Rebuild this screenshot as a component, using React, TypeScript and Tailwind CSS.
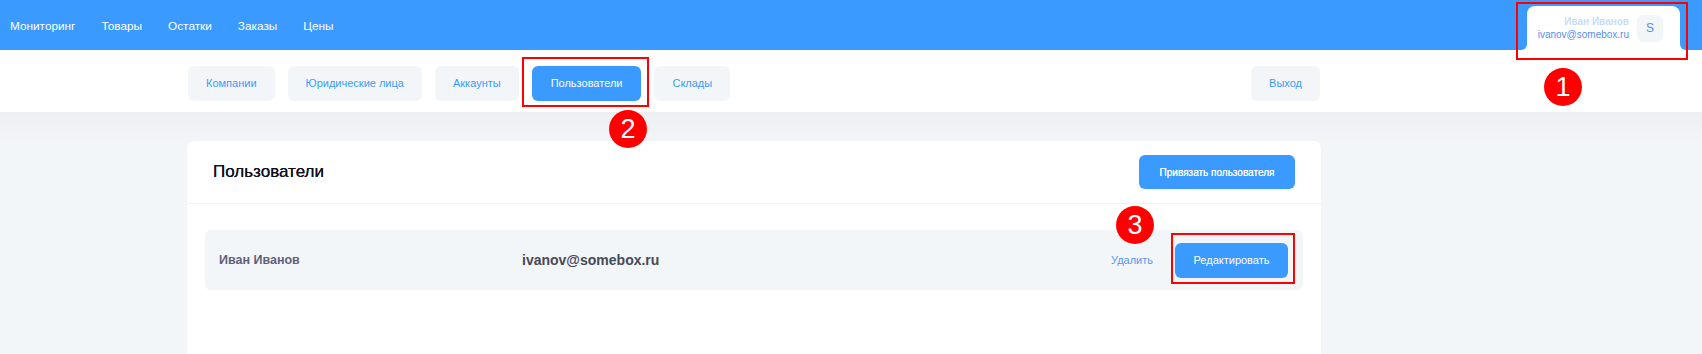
export default function App() {
  const tabs = ["Компании", "Юридические лица", "Аккаунты", "Пользователи", "Склады"];
  return (
    <div className="relative h-[354px] w-[1702px] overflow-hidden bg-[#f3f6f9] font-['Liberation_Sans',Arial,sans-serif]">
      <header className="flex h-[50px] items-end justify-between bg-[#3a9aff]">
        <nav className="flex h-full items-center gap-[26px] pl-[10px] pt-[3px] text-[11.8px] text-white">
          <span>Мониторинг</span>
          <span>Товары</span>
          <span>Остатки</span>
          <span>Заказы</span>
          <span>Цены</span>
        </nav>
        <div className="relative mr-[22px] flex h-[44px] w-[153px] items-center justify-end gap-[8px] rounded-t-[8px] bg-white pr-[17px]">
          <div className="absolute bottom-0 left-[-6px] h-[6px] w-[6px] bg-white">
            <div className="h-full w-full rounded-br-[6px] bg-[#3a9aff]" />
          </div>
          <div className="absolute bottom-0 right-[-6px] h-[6px] w-[6px] bg-white">
            <div className="h-full w-full rounded-bl-[6px] bg-[#3a9aff]" />
          </div>
          <div className="flex flex-col items-end text-[10px] leading-[13px]">
            <span className="font-bold text-[#c8dcfa]">Иван Иванов</span>
            <span className="text-[#5a8df0]">ivanov@somebox.ru</span>
          </div>
          <div className="flex h-[27px] w-[26px] items-center justify-center rounded-[6px] bg-[#f3f6f9] text-[12px] text-[#5a8df0]">
            S
          </div>
        </div>
      </header>

      <div className="h-[63px] border-b border-[#eceef1] bg-white">
        <div className="ml-[188px] flex w-[1132px] items-start justify-between pt-[16px]">
          <div className="flex gap-[13px]">
            {tabs.map((t) => (
              <div
                key={t}
                className={
                  t === "Пользователи"
                    ? "flex h-[35px] items-center rounded-[6px] bg-[#3a9aff] px-[19px] text-[11px] text-white"
                    : "flex h-[35px] items-center rounded-[6px] bg-[#f3f6f9] px-[18px] text-[11px] text-[#3a9aff]"
                }
              >
                {t}
              </div>
            ))}
          </div>
          <div className="flex h-[35px] items-center rounded-[6px] bg-[#f3f6f9] px-[18px] text-[11px] text-[#3a9aff]">
            Выход
          </div>
        </div>
      </div>

      <main className="bg-[linear-gradient(to_bottom,#edeff3,#f3f6f9_30px)] pt-[28px]">
        <section className="ml-[187px] h-[213px] w-[1134px] rounded-t-[8px] bg-white">
          <div className="flex h-[63px] items-center justify-between border-b border-[#eef0f3] px-[26px]">
            <h2 className="text-[17px] text-[#0f1020] [text-shadow:0_0_0.3px_#0f1020]">Пользователи</h2>
            <div className="flex h-[34px] w-[156px] items-center justify-center rounded-[6px] bg-[#3a9aff] text-[10px] text-white [text-shadow:0_0_0.3px_#fff]">
              Привязать пользователя
            </div>
          </div>
          <div className="px-[18px] pt-[26px]">
            <div className="flex h-[60px] items-center rounded-[6px] bg-[#f3f6f9] pl-[14px] pr-[15px]">
              <span className="w-[303px] text-[12.5px] font-bold text-[#5f5f78]">Иван Иванов</span>
              <span className="text-[14px] font-bold text-[#474857]">ivanov@somebox.ru</span>
              <span className="ml-auto mr-[22px] text-[11px] text-[#5b95ee]">Удалить</span>
              <div className="flex h-[35px] w-[113px] items-center justify-center rounded-[6px] bg-[#3a9aff] text-[11px] text-white">
                Редактировать
              </div>
            </div>
          </div>
        </section>
      </main>

      {/* annotations */}
      <div className="absolute left-[1516px] top-[2px] h-[58px] w-[172px] border-2 border-[#ff0000]" />
      <div className="absolute left-[1544px] top-[68px] flex h-[38px] w-[38px] items-center justify-center rounded-full bg-[#ff0000] text-[27px] text-white">
        1
      </div>
      <div className="absolute left-[522px] top-[57px] h-[50px] w-[127px] border-2 border-[#ff0000]" />
      <div className="absolute left-[609px] top-[110px] flex h-[38px] w-[38px] items-center justify-center rounded-full bg-[#ff0000] text-[27px] text-white">
        2
      </div>
      <div className="absolute left-[1171px] top-[233px] h-[51px] w-[124px] border-2 border-[#ff0000]" />
      <div className="absolute left-[1116px] top-[206px] flex h-[38px] w-[38px] items-center justify-center rounded-full bg-[#ff0000] text-[27px] text-white">
        3
      </div>
    </div>
  );
}
